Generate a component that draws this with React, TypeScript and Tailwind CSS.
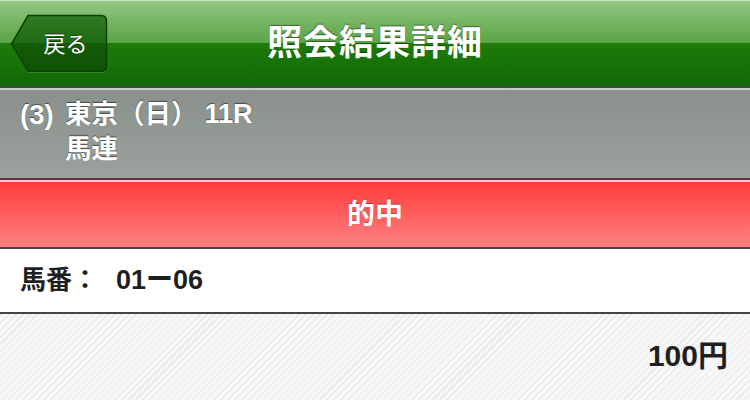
export default function App() {
  return (
    <div className="flex h-[400px] w-[750px] flex-col overflow-hidden bg-white font-['Liberation_Sans','Noto_Sans_CJK_JP',sans-serif]">
      {/* nav bar */}
      <header className="relative flex h-[86px] shrink-0 items-center justify-center border-t border-[#cfe6c6] bg-[linear-gradient(to_bottom,#94c784_0%,#76b463_25%,#5aa546_49%,#1d7c08_50%,#167008_80%,#146706_100%)]">
        <button className="absolute left-[10px] top-[13px] flex h-[60px] w-[99px] items-center justify-center pl-[12px]">
          <svg className="absolute inset-0" width="99" height="60" viewBox="0 0 99 60">
            <defs>
              <linearGradient id="back" x1="0" y1="0" x2="0" y2="1">
                <stop offset="0" stopColor="#2f7a22" />
                <stop offset="0.5" stopColor="#1e6b12" />
                <stop offset="0.5" stopColor="#135c07" />
                <stop offset="1" stopColor="#0f5205" />
              </linearGradient>
            </defs>
            <path d="M1.5 30 L18 2.5 H91 Q96.5 2.5 96.5 8 V52 Q96.5 57.5 91 57.5 H18 Z" fill="#6fae5e" opacity="0.6" transform="translate(0 1.5)" />
            <path d="M1.5 30 L18 1.5 H91 Q96.5 1.5 96.5 7 V52 Q96.5 57.5 91 57.5 H18 Z" fill="url(#back)" stroke="#0b4204" strokeWidth="1.5" />
          </svg>
          <span className="relative text-[22px] text-white [text-shadow:0_-1px_0_rgba(0,0,0,0.5)]">戻る</span>
        </button>
        <h1 className="text-[35px] font-bold tracking-[1px] text-white [text-shadow:0_-1px_1px_rgba(0,0,0,0.45)]">照会結果詳細</h1>
      </header>
      <div className="h-[2px] shrink-0 bg-[#3f4540]" />
      <div className="h-[2px] shrink-0 bg-[#c7cdc8]" />

      {/* race info */}
      <section className="flex h-[88px] shrink-0 flex-col justify-center bg-[linear-gradient(to_bottom,#8a908b,#9ba29e)] pb-[5px] pl-[20px] text-[26.5px] font-bold leading-[35px] text-white [text-shadow:0_-1px_1px_rgba(0,0,0,0.5)]">
        <div className="flex">
          <span className="w-[45px] text-[27.5px]">(3)</span>
          <span>東京（日）</span>
          <span className="ml-[7px] text-[27px]">11R</span>
        </div>
        <div className="pl-[45px]">馬連</div>
      </section>
      <div className="h-[2px] shrink-0 bg-[#404040]" />
      <div className="h-[2px] shrink-0 bg-[#ffcaca]" />

      {/* result */}
      <section className="flex h-[65px] shrink-0 items-center justify-center bg-[linear-gradient(to_bottom,#ff3b3b,#ff8282)] text-[28px] font-bold text-white [text-shadow:0_-1px_1px_rgba(0,0,0,0.3)]">
        的中
      </section>
      <div className="h-[2px] shrink-0 bg-[#444444]" />

      <section className="flex h-[63px] shrink-0 items-center pl-[20px] text-[26px] font-bold text-[#1f1f1f]">
        <span>馬番：</span>
        <span className="ml-[18px] text-[27px]">01ー06</span>
      </section>
      <div className="h-[2px] shrink-0 bg-[#454545]" />

      {/* amount */}
      <section className="flex flex-1 items-center justify-end bg-[#f6f6f6] bg-[repeating-linear-gradient(-45deg,#f7f7f7_0px,#f7f7f7_4px,#e9e9e9_4px,#e9e9e9_5px)] pb-[4px] pr-[22px] text-[30px] font-bold text-[#1f1f1f]">
        100円
      </section>
    </div>
  );
}
